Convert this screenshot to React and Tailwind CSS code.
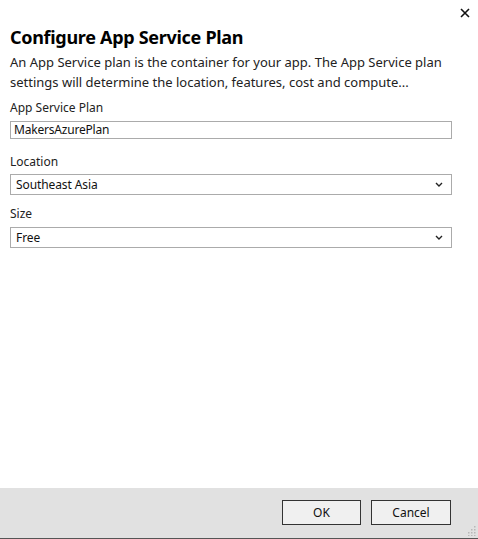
import { useState } from "react";

function Chevron() {
  return (
    <svg width="8" height="5" viewBox="0 0 8 5" className="shrink-0">
      <path d="M1 1 L4 4 L7 1" fill="none" stroke="#222" strokeWidth="1.4" />
    </svg>
  );
}

function SelectBox({ value }) {
  return (
    <div className="flex h-[21px] items-center justify-between border border-[#ababab] bg-white pl-[5px] pr-[8px] text-[12px] text-[#111]">
      <span>{value}</span>
      <Chevron />
    </div>
  );
}

export default function App() {
  const [plan, setPlan] = useState("MakersAzurePlan");

  return (
    <div
      className="flex h-[539px] w-[478px] flex-col bg-white text-[#1e1e1e]"
      style={{ fontFamily: '"Noto Sans", "Open Sans", sans-serif' }}
    >
      <div className="flex h-[24px] justify-end pr-[7px] pt-[6px]">
        <button className="flex h-[13px] w-[13px] items-center justify-center">
          <svg width="10" height="10" viewBox="0 0 10 10">
            <path d="M1 1 L9 9 M9 1 L1 9" stroke="#111" strokeWidth="1.6" />
          </svg>
        </button>
      </div>

      <div className="flex-1 pl-[10px] pr-[26px]">
        <h1 className="text-[18px] font-bold leading-[26px] tracking-[-0.3px] text-black">
          Configure App Service Plan
        </h1>
        <p className="mt-[2px] text-[13px] leading-[20px] tracking-[0px] text-[#222]">
          An App Service plan is the container for your app. The App Service plan
          settings will determine the location, features, cost and compute...
        </p>

        <div className="mt-[7px] text-[12px] leading-[18px] text-[#222]">
          App Service Plan
        </div>
        <input
          value={plan}
          onChange={(e) => setPlan(e.target.value)}
          className="mt-[4px] block h-[18px] w-[442px] border border-[#ababab] px-[3px] text-[12px] tracking-[-0.2px] text-[#111] outline-none"
        />

        <div className="mt-[14px] text-[12px] leading-[18px] text-[#222]">
          Location
        </div>
        <div className="mt-[3px] w-[442px] tracking-[-0.1px]">
          <SelectBox value="Southeast Asia" />
        </div>

        <div className="mt-[10px] text-[12px] leading-[18px] text-[#222]">
          Size
        </div>
        <div className="mt-[4px] w-[442px] tracking-[-0.1px]">
          <SelectBox value="Free" />
        </div>
      </div>

      <div className="relative flex h-[51px] items-start justify-end gap-[10px] border-b border-[#555] bg-[#e1e1e1] pr-[27px] pt-[12px]">
        <button className="h-[25px] w-[79px] border border-[#333] bg-[#f0f0f0] text-[12px] text-[#111]">
          OK
        </button>
        <button className="h-[25px] w-[80px] border border-[#333] bg-[#f0f0f0] text-[12px] text-[#111]">
          Cancel
        </button>
        <svg
          width="10"
          height="10"
          viewBox="0 0 10 10"
          className="absolute bottom-[2px] right-[2px]"
        >
          {[
            [8, 0],
            [8, 3],
            [5, 3],
            [8, 6],
            [5, 6],
            [2, 6],
            [8, 9],
            [5, 9],
            [2, 9],
          ].map(([x, y], i) => (
            <rect key={i} x={x} y={y} width="1.5" height="1.5" fill="#b8b8b8" />
          ))}
        </svg>
      </div>
    </div>
  );
}
